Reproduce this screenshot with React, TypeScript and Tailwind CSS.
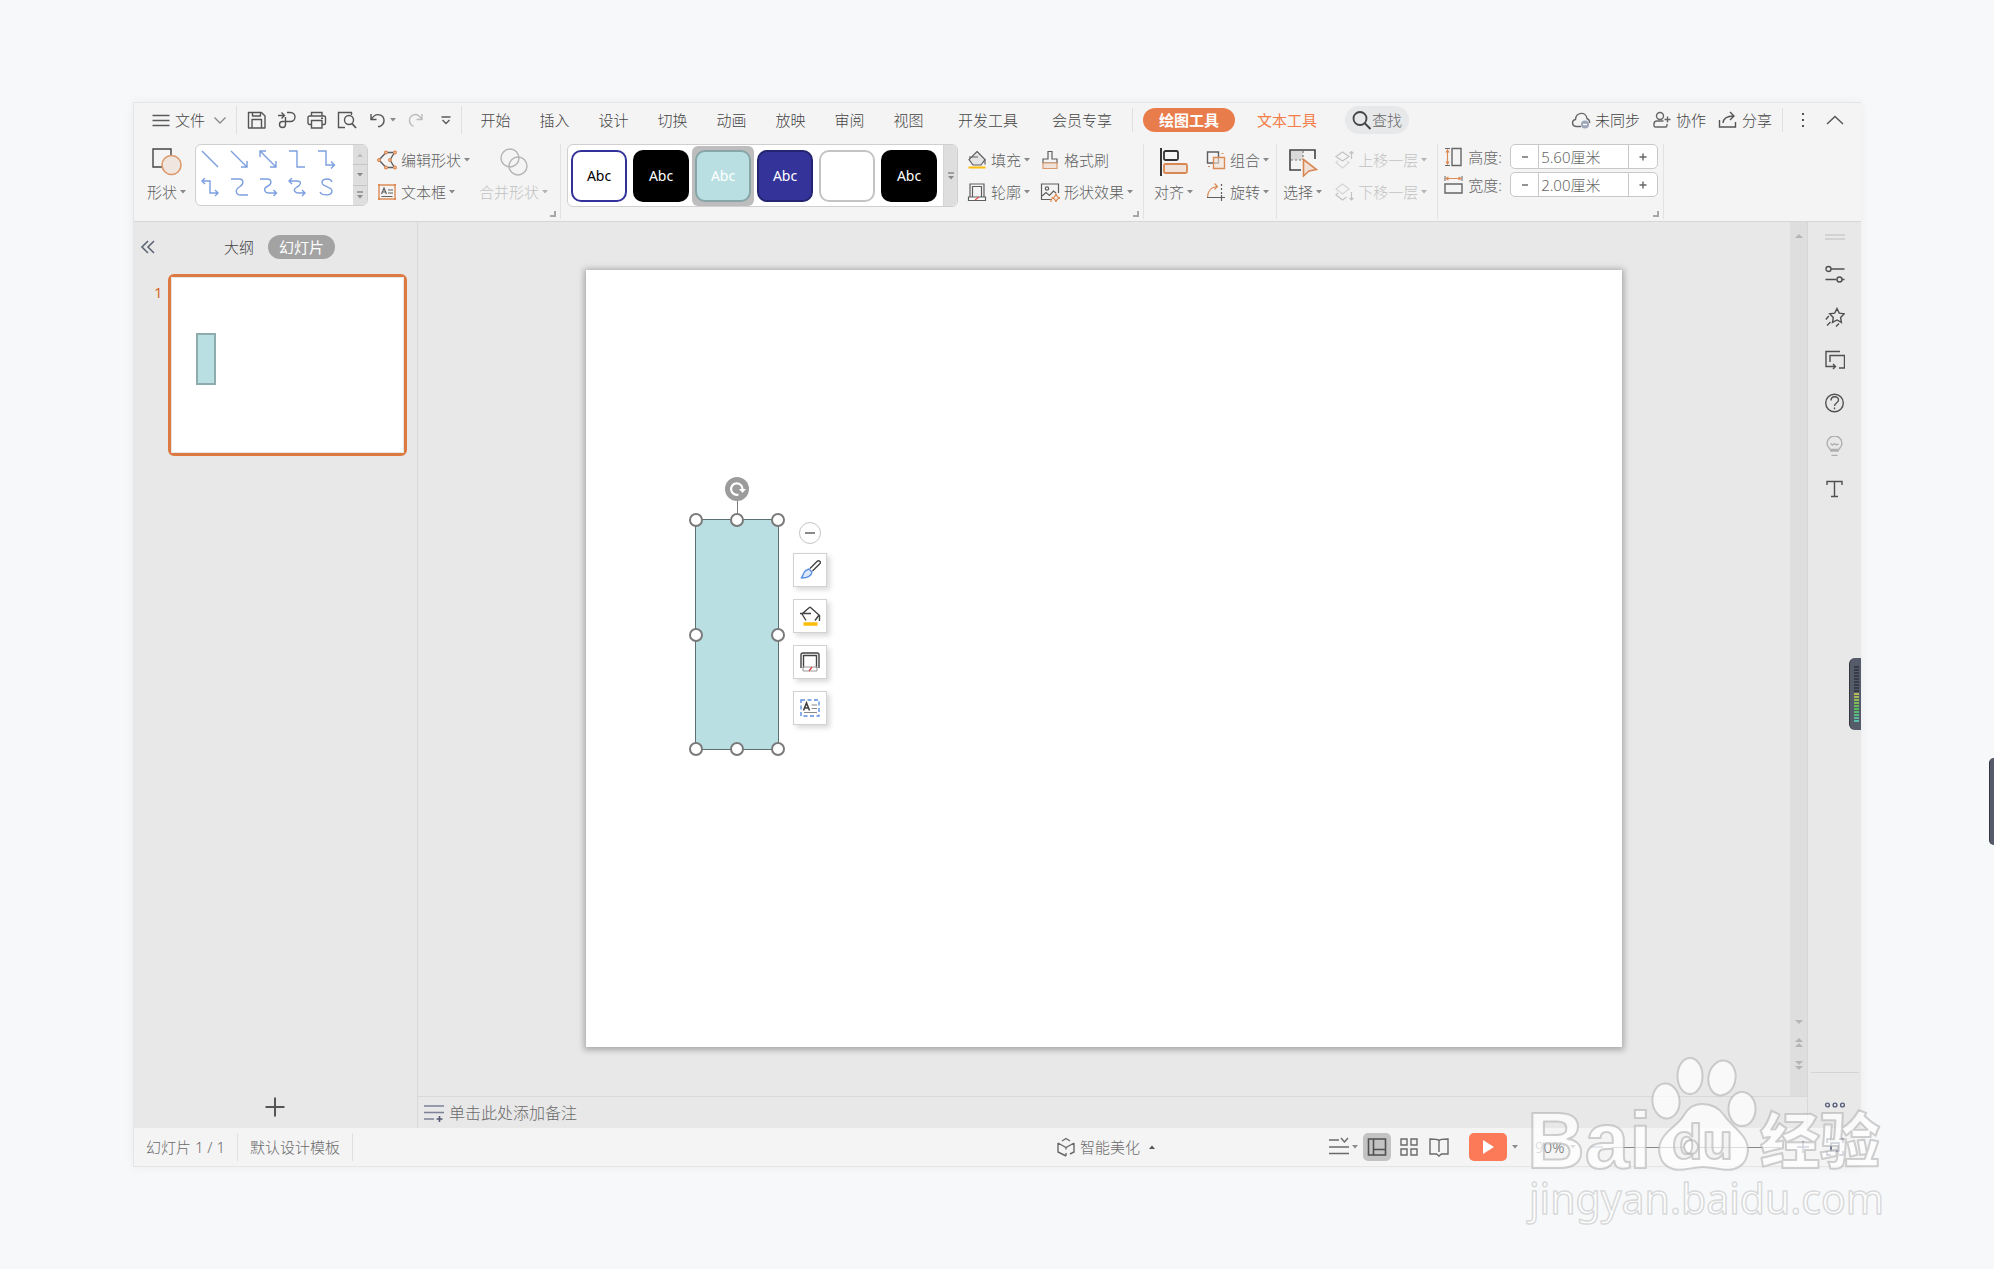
import type { ReactNode } from "react";
import clsx from "clsx";

type IconProps = {
  w?: number;
  h?: number;
  className?: string;
  children: ReactNode;
};

function Icon({ w = 20, h = 20, className, children }: IconProps) {
  return (
    <svg
      width={w}
      height={h}
      viewBox={`0 0 ${w} ${h}`}
      fill="none"
      stroke="currentColor"
      strokeWidth="1.4"
      aria-hidden="true"
      className={clsx("shrink-0", className)}
    >
      {children}
    </svg>
  );
}

function Caret({ className }: { className?: string }) {
  return (
    <Icon w={8} h={8} className={clsx("text-[#8a8a8a]", className)}>
      <path d="M1 2h6L4 5.500z" fill="currentColor" stroke="none" />
    </Icon>
  );
}

function Divider({ className }: { className?: string }) {
  return <span className={clsx("w-px shrink-0 bg-[#e0e0e0]", className)} />;
}

function IconButton({ label, className, children }: { label: string; className?: string; children: ReactNode }) {
  return (
    <button aria-label={label} className={clsx("flex shrink-0 items-center justify-center", className)}>
      {children}
    </button>
  );
}

type CommandProps = {
  icon: ReactNode;
  label: string;
  caret?: boolean;
  disabled?: boolean;
};

function Command({ icon, label, caret = true, disabled }: CommandProps) {
  return (
    <button
      disabled={disabled}
      className="flex h-8 items-center gap-1 whitespace-nowrap disabled:text-[#c2c2c2]"
    >
      {icon}
      <span className="flex items-center gap-0.5">
        {label}
        {caret && <Caret className={disabled ? "opacity-60" : ""} />}
      </span>
    </button>
  );
}

function BigCommand({ icon, label, disabled }: CommandProps) {
  return (
    <button
      disabled={disabled}
      className="flex flex-col items-center gap-1 whitespace-nowrap pt-1 leading-6 disabled:text-[#c2c2c2]"
    >
      {icon}
      <span className="flex items-center gap-0.5">
        {label}
        <Caret className={disabled ? "opacity-60" : ""} />
      </span>
    </button>
  );
}

type GroupProps = {
  className?: string;
  corner?: boolean;
  children: ReactNode;
};

function RibbonGroup({ className, corner, children }: GroupProps) {
  return (
    <div className={clsx("relative flex h-[75px] shrink-0 items-start border-r border-[#e2e2e2]", className)}>
      {children}
      {corner && (
        <span className="absolute right-1 bottom-0.5 size-1.5 border-r-2 border-b-2 border-[#a8a8a8]" />
      )}
    </div>
  );
}

const TABS = ["开始", "插入", "设计", "切换", "动画", "放映", "审阅", "视图"];

function MenuBar() {
  return (
    <div className="flex h-[34px] items-center whitespace-nowrap">
      <button className="ml-[18px] flex items-center">
        <Icon w={18} h={18} className="text-[#5a5a5a]">
          <path d="M.5 4.500h17M.5 9.500h17M.5 14.500h17" />
        </Icon>
        <span className="ml-[5px] w-[30px]">文件</span>
        <Icon w={12} h={12} className="ml-[9px] text-[#8a8a8a]">
          <path d="M.5 3.500L6 9l5.500-5.500" />
        </Icon>
      </button>
      <Divider className="ml-2.5 h-7" />

      <div className="ml-2.5 flex items-center gap-2.5 text-[#555]">
        <IconButton label="保存">
          <Icon>
            <path d="M1.500 2.500h13l3.500 3.500v12H1.500zM5 18v-8.500h9.500V18M5.500 2.500V6h8V2.500" strokeLinejoin="round" />
          </Icon>
        </IconButton>
        <IconButton label="输出为PDF">
          <Icon>
            <path d="M1 5.500h6M4.500 2.500l3 3-3 3M10 2.500h3.500a4.500 4.500 0 0 1 0 9H5.500a3 3 0 1 0 3 3V7" />
          </Icon>
        </IconButton>
        <IconButton label="打印">
          <Icon>
            <path d="M4.500 6V2.500h10.500V6M4.500 14.500H2.500a1.500 1.500 0 0 1-1.500-1.500V7.500A1.500 1.500 0 0 1 2.500 6h14.500a1.500 1.500 0 0 1 1.500 1.500v5.500a1.500 1.500 0 0 1-1.500 1.500h-2M4.500 10.500h10.500v7.500H4.500zM14 8.300h2" />
          </Icon>
        </IconButton>
        <IconButton label="打印预览">
          <Icon>
            <path d="M8 17.500H1.500v-15h13v2.500" />
            <circle cx="12" cy="10" r="4.500" />
            <path d="M15 13.500l4 4.500" strokeWidth="1.800" />
          </Icon>
        </IconButton>
      </div>

      <IconButton label="撤销" className="ml-3">
        <Icon w={18} className="text-[#555]">
          <path d="M2 4v5.500h5.500M2.500 9C5 5 8.500 4 11.500 5.200c4.500 2 5 8.300-.5 11.300H9" />
        </Icon>
        <Caret className="ml-0.5" />
      </IconButton>
      <IconButton label="恢复" className="ml-2.5">
        <Icon w={16} className="text-[#bcbcbc]">
          <path d="M15 4v5.500H9.500M14.500 9C12 5 8.500 4 6 5.200c-4.500 2-5 8.300.5 11.300" />
        </Icon>
      </IconButton>
      <IconButton label="自定义快速访问工具栏" className="ml-[18px]">
        <Icon w={10} h={10} className="text-[#5a5a5a]">
          <path d="M.5 2h9M1.500 5L5 8.500 8.500 5" />
        </Icon>
      </IconButton>
      <Divider className="ml-2.5 h-7" />

      <nav className="ml-1 flex items-center">
        {TABS.map((tab) => (
          <button key={tab} className="w-[59px] text-center">
            {tab}
          </button>
        ))}
        <button className="w-[100px]">开发工具</button>
        <button className="w-[88px]">会员专享</button>
        <Divider className="ml-1.5 h-6" />
        <button className="ml-2.5 h-6 w-[92px] rounded-full bg-[#e87c4b] font-bold text-white">绘图工具</button>
        <button className="w-[104px] font-normal text-[#f37c47]">文本工具</button>
      </nav>
      <button className="ml-1.5 flex h-7 w-16 items-center justify-center rounded-full bg-[#e7e8ea]">
        <Icon className="text-[#444]">
          <circle cx="8" cy="8.500" r="6.500" strokeWidth="1.800" />
          <path d="M12.500 13l6 6" strokeWidth="2" />
        </Icon>
        <span className="w-[30px] text-[#666]">查找</span>
      </button>

      <div className="ml-auto flex items-center">
        <button className="flex items-center gap-1">
          <Icon className="text-[#666]">
            <path d="M10 16.500H5C.5 16 .5 10 4.500 9.500 5 2 15 1 16 8.500c2 1 3 2.500 2.500 4.500" />
            <circle cx="14" cy="14.500" r="4" fill="#9da5b8" stroke="none" />
            <path d="M12 14.500h4" stroke="#fff" />
          </Icon>
          未同步
        </button>
        <button className="ml-3 flex items-center gap-1">
          <Icon className="text-[#666]">
            <circle cx="8" cy="6" r="3.500" />
            <path d="M11.500 11H5a3 3 0 0 0-3 3v1.500a1.500 1.500 0 0 0 1.500 1.500h10a1.500 1.500 0 0 0 1.500-1.500V14M12.500 9.500h6M15.500 6.500v6" />
          </Icon>
          协作
        </button>
        <button className="ml-3 flex items-center gap-1">
          <Icon className="text-[#555]">
            <path d="M1.500 10v7h16v-5M5 13c.5-5 4-7 10.500-7M12 2l4 4-4 4" />
          </Icon>
          分享
        </button>
        <Divider className="ml-2.5 h-6" />
        <IconButton label="更多" className="ml-2.5">
          <Icon className="text-[#555]">
            <path d="M9 4h2M9 10h2M9 16h2" strokeWidth="2" />
          </Icon>
        </IconButton>
        <IconButton label="折叠功能区" className="mr-4 ml-3">
          <Icon className="text-[#555]">
            <path d="M2 14l8-7.500 8 7.500" />
          </Icon>
        </IconButton>
      </div>
    </div>
  );
}

const LINES = [
  "M1 1l16 16",
  "M1 1l16 16M17 11v6h-6",
  "M1 1l16 16M17 11v6h-6M1 7V1h6",
  "M1 1h8v16h8",
  "M1 1h8v14h8M14 11.500l3.500 3.500-3.500 3.500",
  "M1 3h8v12h8M4 0L1 3l3 3M14 12l3 3-3 3",
  "M1 1h8c5 0 5 5 1 7.500C4 12 6 17 11 17h7",
  "M1 1h7c5 0 5 5 1 7C3 11 6 15 10 15h7M14.500 12l3 3-3 3",
  "M1 3h8c5 0 4 4 0 6-5 3-2 6 2 6h6M4 0L1 3l3 3M14 12l3 3-3 3",
  "M15 4c-1-4-9-4-10 0-1 5 10 4 10 9 0 5-10 5-12 1",
];

function ShapeGallery() {
  return (
    <div className="ml-2 flex h-[62px] w-[173px] overflow-hidden rounded-md border border-[#cfcfcf] bg-white">
      <div className="grid flex-1 grid-cols-5 place-items-center pr-3 pb-1">
        {LINES.map((d, i) => (
          <button key={d} aria-label={`线条 ${i + 1}`}>
            <Icon w={19} h={19} className="text-[#7b9fe0]">
              <path d={d} />
            </Icon>
          </button>
        ))}
      </div>
      <div className="flex w-3.5 flex-col divide-y divide-[#c6c6c6] bg-[#dedede]">
        <IconButton label="上一行" className="flex-1">
          <Caret className="rotate-180 opacity-40" />
        </IconButton>
        <IconButton label="下一行" className="flex-1">
          <Caret />
        </IconButton>
        <IconButton label="其他" className="flex-1">
          <Icon w={8} h={8} className="text-[#8a8a8a]">
            <path d="M1 1h6" />
            <path d="M1 4h6L4 7.500z" fill="currentColor" stroke="none" />
          </Icon>
        </IconButton>
      </div>
    </div>
  );
}

const STYLES = [
  { cell: "", tile: "border-2 border-[#33329a] bg-white text-black", text: "Abc" },
  { cell: "", tile: "bg-black text-white", text: "Abc" },
  { cell: "bg-[#bdbdbd]", tile: "border-2 border-[#88a5a7] bg-[#b9dfe2] text-white", text: "Abc" },
  { cell: "", tile: "border-2 border-[#252470] bg-[#343399] text-white", text: "Abc" },
  { cell: "", tile: "border-2 border-[#c4c4c4] bg-white text-white", text: "" },
  { cell: "", tile: "bg-black text-white", text: "Abc" },
];

function StyleGallery() {
  return (
    <div className="flex h-[63px] w-[391px] overflow-hidden rounded-md border border-[#cfcfcf] bg-white">
      <div className="flex flex-1 items-center">
        {STYLES.map((s, i) => (
          <div key={i} className={clsx("flex h-[60px] w-[62px] items-center justify-center rounded-md", s.cell)}>
            <button
              aria-label={`样式 ${i + 1}`}
              className={clsx("h-[52px] w-14 rounded-[10px] text-sm font-normal", s.tile)}
            >
              {s.text}
            </button>
          </div>
        ))}
      </div>
      <IconButton label="更多样式" className="w-3.5 border-l border-[#d4d4d4] bg-[#dedede]">
        <Icon w={8} h={8} className="text-[#8a8a8a]">
          <path d="M1 1h6" />
          <path d="M1 4h6L4 7.500z" fill="currentColor" stroke="none" />
        </Icon>
      </IconButton>
    </div>
  );
}

function SizeField({ id, label, value, icon }: { id: string; label: string; value: string; icon: ReactNode }) {
  return (
    <div className="flex items-center text-[#666]">
      {icon}
      <label htmlFor={id} className="ml-1 w-[42px] whitespace-nowrap">
        {label}
      </label>
      <div className="flex h-[25px] w-[148px] divide-x divide-[#c8c8c8] rounded-[5px] border border-[#c8c8c8] bg-white">
        <IconButton label={`减小${label}`} className="w-7">
          <Icon w={8} h={8}>
            <path d="M1 4h6" />
          </Icon>
        </IconButton>
        <input id={id} defaultValue={value} className="w-0 flex-1 bg-transparent pl-0.5 outline-none" />
        <IconButton label={`增大${label}`} className="w-7">
          <Icon w={8} h={8}>
            <path d="M.5 4h7M4 .5v7" />
          </Icon>
        </IconButton>
      </div>
    </div>
  );
}

function Ribbon() {
  return (
    <div className="flex h-[84px] pt-[7px] text-[#5f5f5f]">
      <RibbonGroup className="pr-[11px] pl-[13px]" corner>
        <BigCommand
          label="形状"
          icon={
            <Icon w={30} h={28} className="text-[#444]">
              <path d="M1 1h18v18H1z" />
              <circle cx="19.500" cy="17" r="9.500" fill="#f1e6df" stroke="#dc9a6c" strokeWidth="1.600" />
            </Icon>
          }
        />
        <ShapeGallery />
        <div className="ml-[9px]">
          <Command
            label="编辑形状"
            icon={
              <Icon>
                <path d="M9 2.500h8.500L13 10l4.500 7.500H9L2 10z" />
                <g fill="#fff" stroke="#dc8a56">
                  <circle cx="9" cy="2.500" r="1.300" />
                  <circle cx="18" cy="2.500" r="1.300" />
                  <circle cx="2" cy="10" r="1.300" />
                  <circle cx="13" cy="10" r="1.300" />
                  <circle cx="9" cy="17.500" r="1.300" />
                  <circle cx="18" cy="17.500" r="1.300" />
                </g>
              </Icon>
            }
          />
          <Command
            label="文本框"
            icon={
              <Icon>
                <path d="M2 3h16v14H2z" stroke="#dc8a56" />
                <path d="M1 2h2v2H1zM17 2h2v2h-2zM1 16h2v2H1zM17 16h2v2h-2z" fill="#dc8a56" stroke="none" />
                <path d="M4.500 12L7 6l2.500 6M5.500 10h3M11 8h5M11 11h5M4.500 14.500h11" strokeWidth="1.200" />
              </Icon>
            }
          />
        </div>
        <div className="ml-2">
          <BigCommand
            label="合并形状"
            disabled
            icon={
              <Icon w={30} h={28} className="text-[#b4b4b4]">
                <circle cx="11" cy="10" r="9" />
                <circle cx="19" cy="18" r="9" />
              </Icon>
            }
          />
        </div>
      </RibbonGroup>

      <RibbonGroup className="pr-[9px] pl-1.5" corner>
        <StyleGallery />
        <div className="ml-[9px]">
          <Command
            label="填充"
            icon={
              <Icon>
                <path d="M10 1.500l8 8-4 5.500H6L2 9.500zM2 7h9" fill="#e4e4e4" strokeWidth="1.200" />
                <path d="M18 9.500v5" strokeWidth="1.200" />
                <path d="M1.500 17.500h17" stroke="#fdbb0a" strokeWidth="2" />
              </Icon>
            }
          />
          <Command
            label="轮廓"
            icon={
              <Icon>
                <path d="M3 15V2h14v13M5.500 15V4.500h9V15" strokeWidth="1.200" />
                <path d="M1.500 15h17v3.500h-17z" fill="#fff" strokeWidth="1.200" />
                <path d="M8 18l4-3" stroke="#e24b4b" strokeWidth="1.200" />
              </Icon>
            }
          />
        </div>
        <div className="ml-[9px]">
          <Command
            label="格式刷"
            caret={false}
            icon={
              <Icon>
                <path d="M8 9V1.500h4V9h5v4H3V9z" strokeWidth="1.200" />
                <path d="M3 13h14v5.500H3z" fill="#f1e2d9" stroke="#dc9a6c" strokeWidth="1.200" />
              </Icon>
            }
          />
          <Command
            label="形状效果"
            icon={
              <Icon>
                <path d="M12 17.500H1.500V2h17v9M2 14l4-3.500 3.500 3 4-4.500 2.500 2" strokeWidth="1.200" />
                <circle cx="7" cy="6.500" r="1.700" strokeWidth="1.200" />
                <path d="M16 12l1.200 2.800L20 16l-2.800 1.200L16 20l-1.200-2.800L12 16l2.800-1.200zM11 17v3" stroke="#dc8a56" strokeWidth="1.200" />
              </Icon>
            }
          />
        </div>
      </RibbonGroup>

      <RibbonGroup className="pr-1.5 pl-2.5">
        <BigCommand
          label="对齐"
          icon={
            <Icon w={30} h={30} className="-mb-0.5 text-[#333]">
              <path d="M2 0v28" strokeWidth="2" />
              <rect x="5" y="3" width="14" height="9" rx="1.500" strokeWidth="1.800" />
              <rect x="5" y="16" width="23" height="9" rx="1.500" fill="#f1e2d9" stroke="#d98752" strokeWidth="1.800" />
            </Icon>
          }
        />
        <div className="ml-3">
          <Command
            label="组合"
            icon={
              <Icon>
                <path d="M1.500 2h11v11h-11z" />
                <path d="M7.500 7.500h11v11h-11z" fill="#f1e2d9" fillOpacity=".6" stroke="#dc8a56" />
                <path d="M3 16v1M16.500 3v1" stroke="#dc8a56" strokeWidth="2" />
              </Icon>
            }
          />
          <Command
            label="旋转"
            icon={
              <Icon>
                <path d="M1.500 15C2 9 5 5 11 4.500M8.500 1.500l3 3-3 3" stroke="#dc8a56" strokeWidth="1.200" />
                <path d="M1 15.500h18M15.500 13v6" strokeWidth="1.200" />
                <path d="M15.500 2v11" strokeDasharray="2 2" strokeWidth="1.200" />
              </Icon>
            }
          />
        </div>
      </RibbonGroup>

      <RibbonGroup className="pr-[9px] pl-1.5">
        <BigCommand
          label="选择"
          icon={
            <Icon w={30} h={30} className="-mb-0.5 text-[#444]">
              <path d="M2 2h13v10H2z" fill="#dadada" stroke="none" />
              <path d="M13 22H2V2h25v9" strokeWidth="1.600" />
              <path d="M3 12h12M15 3v9" strokeDasharray="2 2" stroke="#777" strokeWidth="1.200" />
              <path d="M15.500 11.500l13 10-7.500 1.500-5.500 5z" fill="#f1e2d9" stroke="#d98752" strokeWidth="1.600" />
            </Icon>
          }
        />
        <div className="ml-[11px]">
          <Command
            label="上移一层"
            disabled
            icon={
              <Icon>
                <path d="M8.500 2L15 6.500 8.500 11 2 6.500zM17.500 9V1.500M15.500 3.500l2-2 2 2" strokeWidth="1.200" />
                <path d="M4 11l-2 1.500L8.500 18l6.500-5.500-2-1.500" strokeWidth="1.200" opacity=".6" />
              </Icon>
            }
          />
          <Command
            label="下移一层"
            disabled
            icon={
              <Icon>
                <path d="M8.500 2L15 7 8.500 12 2 7z" strokeWidth="1.200" opacity=".6" />
                <path d="M4 11l-2 2 6.500 5 4-3M17.500 10v8M15.500 16l2 2 2-2" strokeWidth="1.200" />
              </Icon>
            }
          />
        </div>
      </RibbonGroup>

      <RibbonGroup className="pr-[5px] pl-1.5" corner>
        <div className="flex flex-col gap-[3px]">
          <SizeField
            id="shape-height"
            label="高度:"
            value="5.60厘米"
            icon={
              <Icon>
                <path d="M8 1.500h9v17H8z" />
                <path d="M1 1.500h5M1 18.500h5" strokeWidth="1" />
                <path d="M3.500 3v14M2 5.500L3.500 3 5 5.500M2 14.500L3.500 17 5 14.500" stroke="#dc8a56" strokeWidth="1.200" />
              </Icon>
            }
          />
          <SizeField
            id="shape-width"
            label="宽度:"
            value="2.00厘米"
            icon={
              <Icon>
                <path d="M1 9h17v9H1z" />
                <path d="M1 1v5M18 1v5" strokeWidth="1" />
                <path d="M2 3.500h15M4.500 2L2 3.500 4.500 5M14.500 2L17 3.500 14.500 5" stroke="#dc8a56" strokeWidth="1.200" />
              </Icon>
            }
          />
        </div>
      </RibbonGroup>
    </div>
  );
}

function SlidePanel() {
  return (
    <aside className="flex w-[284px] shrink-0 flex-col border-r border-[#d8d8d8]">
      <div className="mt-[13px] flex h-6 items-center">
        <IconButton label="收起" className="ml-1.5">
          <Icon w={16} h={16} className="text-[#5d6675]">
            <path d="M8 2L2 8l6 6M14 2L8 8l6 6" strokeWidth="1.600" />
          </Icon>
        </IconButton>
        <button className="ml-[68px]">大纲</button>
        <button className="ml-3.5 h-6 w-[67px] rounded-full bg-[#a3a3a3] font-normal text-white">幻灯片</button>
      </div>
      <div className="mt-[15px] mr-2.5 ml-5 flex gap-1.5">
        <span className="mt-2 w-2 font-normal text-[#d86b2c]">1</span>
        <div className="relative aspect-[239/182] flex-1 rounded-md border-3 border-[#dc7a42] bg-white">
          <div className="absolute inset-0 border border-[#e6e6e6]" />
          <div className="absolute top-14 left-[25px] h-[52px] w-5 border-2 border-[#8eacae] bg-[#b9dfe2]" />
        </div>
      </div>
      <IconButton label="新建幻灯片" className="mt-auto mr-0.5 mb-[11px] self-center">
        <Icon className="text-[#555]">
          <path d="M10 .5v19M.5 10h19" strokeWidth="2" />
        </Icon>
      </IconButton>
    </aside>
  );
}

const HANDLES = [
  "top-0 left-0",
  "top-0 left-1/2",
  "top-0 left-full",
  "top-1/2 left-0",
  "top-1/2 left-full",
  "top-full left-0",
  "top-full left-1/2",
  "top-full left-full",
];

const QUICK_TOOLS = [
  {
    label: "样式",
    icon: (
      <>
        <path d="M11 9.500L18 2.500c1.500-1.500 4.500 0 3 2L13.500 12" />
        <path d="M10 10l3 3c-.5 4-4 6-11 6 2-1 1.500-3 3-5.500 1-2 3-3 5-3.500z" fill="#dbe8fb" stroke="#5b8ee0" />
      </>
    ),
  },
  {
    label: "填充",
    icon: (
      <>
        <path d="M11 2L3 9l4 6.500M11 2l9 8-4 5.500M1 8.500h11M20.500 10v6" />
        <path d="M4.500 19h14" stroke="#fdbb0a" strokeWidth="3.500" />
      </>
    ),
  },
  {
    label: "轮廓",
    icon: (
      <>
        <path d="M2 17V4a2 2 0 0 1 2-2h14a2 2 0 0 1 2 2v13" />
        <path d="M4.500 17V4.500h13V17" />
        <path d="M4 16h14v4H4z" stroke="#999" strokeWidth="1" />
        <path d="M10 20l3-4" stroke="#e24b4b" />
      </>
    ),
  },
  {
    label: "文本",
    icon: (
      <>
        <path d="M2 3h18v16H2z" stroke="#5b8ee0" strokeDasharray="4 2.500" />
        <path d="M4.500 13.500L7.500 6l3 7.500M5.500 11h4" strokeWidth="1.600" />
        <path d="M12.500 8H18M12.500 11.500H18M5 15.500h13" stroke="#888" strokeWidth="1.200" />
      </>
    ),
  },
];

function SelectedShape() {
  return (
    <div className="absolute top-[249px] left-[109px] h-[231px] w-[84px] border border-[#5b7072] bg-[#b9dfe2]">
      <span className="absolute bottom-full left-1/2 h-5 w-px bg-[#7d7d7d]" />
      <IconButton label="旋转" className="absolute -top-[43px] left-1/2 -translate-x-1/2">
        <Icon w={24} h={24} className="text-white">
          <circle cx="12" cy="12" r="12" fill="#9c9c9c" stroke="none" />
          <path d="M13.500 17.500a5.700 5.700 0 1 1 4-5.500" strokeWidth="2.200" />
          <path d="M14 12h7l-3.500 4z" fill="currentColor" stroke="none" />
        </Icon>
      </IconButton>
      {HANDLES.map((pos) => (
        <span
          key={pos}
          className={clsx(
            "absolute size-3.5 -translate-1/2 rounded-full border-2 border-[#7a7a7a] bg-white",
            pos
          )}
        />
      ))}
      <div className="absolute top-[2px] left-[97px] flex flex-col items-center">
        <IconButton label="收起" className="size-[22px] rounded-full border border-[#c4c4c4] bg-white">
          <Icon w={12} h={12} className="text-[#8a8a8a]">
            <path d="M1 6h10" strokeWidth="2" />
          </Icon>
        </IconButton>
        <div className="mt-[9px] flex flex-col gap-3">
          {QUICK_TOOLS.map((tool) => (
            <IconButton
              key={tool.label}
              label={tool.label}
              className="size-[34px] border border-[#d2d2d2] bg-white text-[#444] shadow-[3px_3px_5px_rgba(0,0,0,0.15)]"
            >
              <Icon w={22} h={22}>{tool.icon}</Icon>
            </IconButton>
          ))}
        </div>
      </div>
    </div>
  );
}

function Workspace() {
  return (
    <main className="flex min-w-0 flex-1 flex-col">
      <div className="flex flex-1">
        <div className="flex-1 px-[168px] pt-12 pb-[49px]">
          <div className="relative aspect-[4/3] w-full bg-white shadow-[0_1px_6px_2px_rgba(0,0,0,0.28)]">
            <SelectedShape />
          </div>
        </div>
        <div className="flex w-[18px] flex-col items-center border-r border-[#d6d6d6] bg-[#dedede] text-[#b5b5b5]">
          <Icon w={8} h={8} className="mt-2.5">
            <path d="M0 6h8L4 2z" fill="currentColor" stroke="none" />
          </Icon>
          <Icon w={8} h={8} className="mt-auto">
            <path d="M0 2h8L4 6z" fill="currentColor" stroke="none" />
          </Icon>
          <Icon w={8} h={10} className="mt-3">
            <path d="M0 4h8L4 0zM0 9h8L4 5z" fill="currentColor" stroke="none" />
          </Icon>
          <Icon w={8} h={10} className="mt-3 mb-[26px]">
            <path d="M0 1h8L4 5zM0 6h8L4 10z" fill="currentColor" stroke="none" />
          </Icon>
        </div>
      </div>
      <div className="flex h-8 items-center border-t border-r border-[#d8d8d8] pl-1.5 text-base text-[#6a6a6a]">
        <Icon className="text-[#7b8197]">
          <path d="M0 3h20M0 9.500h20M0 16h10" strokeWidth="1.600" />
          <path d="M12.500 16h6M15.500 13v6" stroke="#555b75" strokeWidth="1.600" />
        </Icon>
        <span className="ml-[5px]">单击此处添加备注</span>
      </div>
    </main>
  );
}

const SIDE_TOOLS = [
  {
    label: "对象属性",
    tone: "",
    icon: (
      <>
        <path d="M6 5h13.500M.5 15.500h11M17 15.500h2.500" />
        <circle cx="3.500" cy="5" r="2.500" />
        <circle cx="14.500" cy="15.500" r="2.500" />
      </>
    ),
  },
  {
    label: "动画",
    tone: "",
    icon: (
      <>
        <path d="M12 1.500l2.200 4.600 5 .7-3.600 3.600.8 5-4.400-2.400-4.500 2.400.8-5L4.700 6.800l5-.7z" />
        <path d="M.8 12.500l3-3.500M2 18.500l3.500-3.500M11 19.500l3-3" />
      </>
    ),
  },
  {
    label: "切换",
    tone: "",
    icon: <path d="M15 1.500H1v15h9M8 14l2.500 2.500L8 19M5 12V5.500h14.500v12.500H14" />,
  },
  {
    label: "帮助",
    tone: "",
    icon: (
      <>
        <circle cx="9.500" cy="10" r="8.800" />
        <path d="M6 7.500c0-5 7.500-5 7.500-.5 0 3-4 3-4 6M9.500 14.500v1.700" />
      </>
    ),
  },
  {
    label: "提示",
    tone: "text-[#aeaeae]",
    icon: (
      <path d="M6 15c0-2-4-3.500-4-7.500a7.500 7.500 0 0 1 15 0c0 4-4 5.500-4 7.500zM6 13.500h7M6.500 19.500h6M5.500 7.500l2 1.500 2-1.500 2 1.500 2-1" />
    ),
  },
  {
    label: "字体",
    tone: "",
    icon: <path d="M2 6V2.500h15V6M9.500 2.500v15M6 17.500h7" />,
  },
];

function SideBar() {
  return (
    <aside className="flex w-[53px] shrink-0 flex-col items-center text-[#505050]">
      <Icon w={20} h={6} className="mt-3 text-[#bdbdbd]">
        <path d="M0 1h20M0 5h20" strokeWidth="1" />
      </Icon>
      <div className="mt-6 flex flex-col gap-[23px]">
        {SIDE_TOOLS.map((tool) => (
          <IconButton key={tool.label} label={tool.label} className={tool.tone}>
            <Icon>{tool.icon}</Icon>
          </IconButton>
        ))}
      </div>
      <span className="mt-auto h-px w-12 bg-[#d4d4d4]" />
      <IconButton label="更多" className="mt-[27px] mb-[18px]">
        <Icon h={10} className="text-[#555e7a]">
          <circle cx="2.500" cy="5" r="1.900" />
          <circle cx="10" cy="5" r="1.900" />
          <circle cx="17.500" cy="5" r="1.900" />
        </Icon>
      </IconButton>
    </aside>
  );
}

function StatusBar() {
  return (
    <footer className="flex h-[38px] items-center whitespace-nowrap bg-[#f4f4f4] text-[#6a6a6a]">
      <span className="ml-3">幻灯片 1 / 1</span>
      <Divider className="ml-3 h-7" />
      <span className="ml-3">默认设计模板</span>
      <Divider className="ml-3 h-7" />

      <button className="mr-[173px] ml-auto flex items-center">
        <Icon>
          <path d="M6 4l4-2.500L14 4M2 6l8 4.500L18 6M2 6v9l8 4M18 6v9l-4 2M10 10.500v2M10 19v-3" />
        </Icon>
        <span className="ml-1">智能美化</span>
        <Caret className="ml-2 rotate-180 text-[#555]" />
      </button>

      <IconButton label="备注">
        <Icon>
          <path d="M0 3h10M0 10h20M0 16.500h20M12 1l3.500 4L19 1" />
        </Icon>
        <Caret className="ml-0.5" />
      </IconButton>
      <IconButton label="普通视图" className="ml-1 size-7 rounded-[5px] bg-[#c3c3c3] text-[#505050]">
        <Icon>
          <path d="M1.500 2h17v16h-17zM6.500 2v16M6.500 12.500h12" strokeWidth="1.600" />
        </Icon>
      </IconButton>
      <IconButton label="幻灯片浏览" className="ml-2">
        <Icon>
          <path d="M2 2h6v6H2zM12 2h6v6h-6zM2 12h6v6H2zM12 12h6v6h-6z" />
        </Icon>
      </IconButton>
      <IconButton label="阅读视图" className="ml-2.5">
        <Icon>
          <path d="M10 3.500C9 2 7 2 1 2v15h6.500L10 19l2.500-2H19V2c-6 0-8 0-9 1.500zM10 3.500V15" />
        </Icon>
      </IconButton>
      <IconButton label="从当前幻灯片开始播放" className="ml-5 h-7 w-[38px] rounded-[5px] bg-[#fc7a58] text-white">
        <Icon>
          <path d="M5 3l11 7-11 7z" fill="currentColor" stroke="none" />
        </Icon>
      </IconButton>
      <Caret className="ml-1" />
      <span className="ml-4 w-[30px]">90%</span>
      <Caret className="ml-1" />
      <IconButton label="缩小" className="ml-3.5 text-[#7b8db0]">
        <Icon w={12} h={12}>
          <path d="M0 6h12" />
        </Icon>
      </IconButton>
      <input
        type="range"
        aria-label="缩放"
        min={0}
        max={100}
        defaultValue={47}
        className="ml-2 h-4 w-[170px] appearance-none bg-transparent [&::-webkit-slider-runnable-track]:h-px [&::-webkit-slider-runnable-track]:bg-[#888] [&::-webkit-slider-thumb]:-mt-2 [&::-webkit-slider-thumb]:size-4 [&::-webkit-slider-thumb]:appearance-none [&::-webkit-slider-thumb]:rounded-full [&::-webkit-slider-thumb]:border-2 [&::-webkit-slider-thumb]:border-[#333] [&::-webkit-slider-thumb]:bg-white"
      />
      <IconButton label="放大" className="ml-4 text-[#55658a]">
        <Icon w={12} h={12}>
          <path d="M0 6h12M6 0v12" />
        </Icon>
      </IconButton>
      <IconButton label="适应窗口" className="mr-4 ml-4 text-[#3d486a]">
        <Icon>
          <path d="M2 6V2h4M14 2h4v4M18 14v4h-4M6 18H2v-4M6 6h8v8H6z" />
        </Icon>
      </IconButton>
    </footer>
  );
}

const LEVELS = Array.from({ length: 19 }, (_, i) => i);

function levelColor(i: number) {
  if (i < 9) return "#363b47";
  const hue = 62 + (i - 9) * 12;
  return `hsl(${hue} 42% 54%)`;
}

function LevelMeter() {
  return (
    <div className="absolute top-[556px] right-0 flex h-[72px] w-3 flex-col gap-px rounded-l-md border-l border-[#33363f] bg-[#555b69] pt-2 pl-1">
      {LEVELS.map((i) => (
        <span key={i} className="h-0.5 w-[5px] shrink-0" style={{ backgroundColor: levelColor(i) }} />
      ))}
    </div>
  );
}

function Watermark() {
  return (
    <svg
      width="370"
      height="180"
      viewBox="0 0 370 180"
      className="pointer-events-none absolute -right-[33px] -bottom-16"
      fill="#fff"
      fillOpacity=".72"
      stroke="#b0b0b0"
      strokeOpacity=".6"
      strokeWidth="2"
      strokeLinejoin="round"
    >
      <text x="3" y="117" className="font-['Liberation_Sans'] text-[80px] font-bold">
        Bai
      </text>
      <ellipse cx="142" cy="50" rx="13.500" ry="17.500" transform="rotate(-6 142 50)" />
      <ellipse cx="166" cy="25" rx="12.500" ry="18" />
      <ellipse cx="198" cy="27" rx="13.500" ry="17.500" transform="rotate(10 198 27)" />
      <ellipse cx="218" cy="58" rx="13.500" ry="17" />
      <path d="M178 53c-9 0-14 4-18 11-5 9-13 12-20 21-9 12-5 29 9 33 9 3 18-2 30-2s22 5 31 2c14-4 18-21 9-33-7-9-14-13-19-21-5-7-13-11-22-11z" />
      <text x="148" y="108" fill="#ddd" fillOpacity=".3" className="font-['Liberation_Sans'] text-[50px] font-bold">
        du
      </text>
      <text x="236" y="112" className="font-['Noto_Sans_CJK_SC'] text-[60px] font-black">
        经验
      </text>
      <text x="5" y="163" strokeWidth="1.500" strokeOpacity=".45" className="font-['Noto_Sans'] text-[41px] font-normal">
        jingyan.baidu.com
      </text>
    </svg>
  );
}

export default function App() {
  return (
    <div className="relative min-h-screen bg-[#f7f8fa] px-[133px] pt-[102px] pb-[102px] font-['Noto_Sans','Noto_Sans_CJK_SC',sans-serif] text-[15px] leading-5 font-light text-[#444]">
      <div className="relative">
        <div className="border border-r-0 border-[#e4e5e6] bg-[#f4f4f4] shadow-[0_0_10px_rgba(0,0,0,0.05)]">
          <header>
            <MenuBar />
            <Ribbon />
          </header>
          <div className="relative flex border-t border-[#d6d6d6] bg-[#e8e8e8]">
            <SlidePanel />
            <Workspace />
            <SideBar />
          </div>
          <StatusBar />
        </div>
        <LevelMeter />
        <Watermark />
      </div>
      <div className="absolute top-[758px] right-0 h-[87px] w-[5px] rounded-l-md border-l border-[#33363f] bg-[#555b69]" />
    </div>
  );
}
